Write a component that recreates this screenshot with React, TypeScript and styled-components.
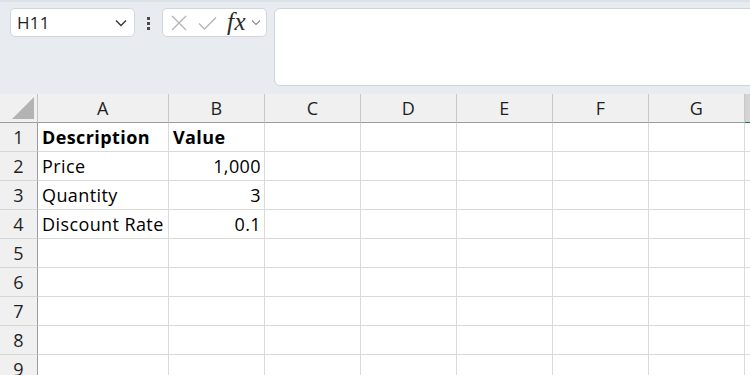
import React, { FC } from "react";
import styled, { createGlobalStyle } from "styled-components";

const GlobalStyle = createGlobalStyle`
  html, body {
    margin: 0;
    padding: 0;
    background: #ffffff;
    overflow: hidden;
  }
  * {
    box-sizing: border-box;
  }
`;

const COLUMNS = ["A", "B", "C", "D", "E", "F", "G", "H"];

type Cell = { text: string; bold?: boolean; align?: "left" | "right" };

const DATA: Cell[][] = [
  [{ text: "Description", bold: true }, { text: "Value", bold: true }],
  [{ text: "Price" }, { text: "1,000", align: "right" }],
  [{ text: "Quantity" }, { text: "3", align: "right" }],
  [{ text: "Discount Rate" }, { text: "0.1", align: "right" }],
];

const ROW_COUNT = 9;

const App: FC = () => {
  return (
    <>
      <GlobalStyle />
      <Wrapper>
        <Toolbar>
          <NameBox>
            <NameText>H11</NameText>
            <svg width="12" height="8" viewBox="0 0 12 8">
              <path d="M1 1.5 L6 6.5 L11 1.5" fill="none" stroke="#333" strokeWidth="1.3" />
            </svg>
          </NameBox>
          <Dots>
            <Dot />
            <Dot />
            <Dot />
          </Dots>
          <FormulaButtons>
            <svg width="18" height="18" viewBox="0 0 18 18">
              <path d="M2 2 L16 16 M16 2 L2 16" stroke="#b4b4b4" strokeWidth="1.3" fill="none" />
            </svg>
            <svg width="19" height="18" viewBox="0 0 19 18">
              <path d="M1 9.5 L6.5 15 L18 3.5" stroke="#b4b4b4" strokeWidth="1.3" fill="none" />
            </svg>
            <FxLabel>fx</FxLabel>
            <svg width="10" height="7" viewBox="0 0 10 7">
              <path d="M1 1.5 L5 5.5 L9 1.5" fill="none" stroke="#8a8a8a" strokeWidth="1.1" />
            </svg>
          </FormulaButtons>
          <FormulaBar />
        </Toolbar>
        <Sheet>
          <Corner>
            <svg width="22" height="22" viewBox="0 0 22 22">
              <path d="M22 0 L22 22 L0 22 Z" fill="#b3b3b3" />
            </svg>
          </Corner>
          {COLUMNS.map((col) => (
            <ColHeader key={col} selected={col === "H"}>
              {col !== "H" && col}
            </ColHeader>
          ))}
          {Array.from({ length: ROW_COUNT }).map((_, r) => (
            <React.Fragment key={r}>
              <RowHeader>{r + 1}</RowHeader>
              {COLUMNS.map((col, c) => {
                const cell = DATA[r]?.[c];
                return (
                  <GridCell key={col} bold={cell?.bold} align={cell?.align}>
                    {cell?.text}
                  </GridCell>
                );
              })}
            </React.Fragment>
          ))}
        </Sheet>
      </Wrapper>
    </>
  );
};

export default App;

const Wrapper = styled.div`
  width: 750px;
  height: 375px;
  overflow: hidden;
  font-family: "Open Sans", "Noto Sans", sans-serif;
`;

const Toolbar = styled.div`
  height: 94px;
  background: #e8ecf1;
  border-top: 2px solid #dde2e8;
  padding: 6px 0 0 10px;
  display: flex;
  align-items: flex-start;
`;

const NameBox = styled.div`
  width: 125px;
  height: 29px;
  background: #ffffff;
  border: 1px solid #d2d5d9;
  border-radius: 5px;
  display: flex;
  align-items: center;
  justify-content: space-between;
  padding: 0 7px 0 6px;
`;

const NameText = styled.span`
  font-size: 17px;
  letter-spacing: 0.3px;
  color: #1f1f1f;
`;

const Dots = styled.div`
  width: 27px;
  height: 29px;
  padding-top: 2px;
  display: flex;
  flex-direction: column;
  align-items: center;
  justify-content: center;
  gap: 2px;
`;

const Dot = styled.span`
  width: 3px;
  height: 3px;
  background: #4a4a4a;
`;

const FormulaButtons = styled.div`
  width: 105px;
  height: 29px;
  background: #ffffff;
  border: 1px solid #d2d5d9;
  border-radius: 5px;
  display: flex;
  align-items: center;
  padding: 0 4px 0 7px;
  gap: 10px;

  & > svg:last-child {
    margin-left: -5px;
  }
`;

const FxLabel = styled.span`
  font-family: "Liberation Serif", "DejaVu Serif", serif;
  font-style: italic;
  font-size: 25px;
  color: #2b2b2b;
  line-height: 1;
  margin-top: -2px;
  letter-spacing: 0.5px;
`;

const FormulaBar = styled.div`
  flex: 1;
  height: 78px;
  margin-left: 7px;
  margin-right: -10px;
  background: #ffffff;
  border: 1px solid #cfd2d6;
  border-radius: 6px;
`;

const Sheet = styled.div`
  display: grid;
  grid-template-columns: 38px 131px 96px 96px 96px 96px 96px 96px 96px;
  grid-template-rows: 29px;
  grid-auto-rows: 29px;
  font-size: 18px;
  letter-spacing: 0.4px;
  color: #000000;
`;

const Corner = styled.div`
  background: #f0f0f0;
  border-bottom: 1px solid #9c9c9c;
  border-right: 1px solid #c4c4c4;
  display: flex;
  align-items: flex-end;
  justify-content: flex-end;
  padding: 0 3px 3px 0;
`;

const ColHeader = styled.div<{ selected?: boolean }>`
  background: ${(p) => (p.selected ? "#d3d3d3" : "#f0f0f0")};
  border-bottom: 1px solid ${(p) => (p.selected ? "#1e7145" : "#9c9c9c")};
  border-right: 1px solid #c8c8c8;
  display: flex;
  align-items: center;
  justify-content: center;
  color: #1f1f1f;
`;

const RowHeader = styled.div`
  background: #f0f0f0;
  border-bottom: 1px solid #d6d6d6;
  border-right: 1px solid #9c9c9c;
  display: flex;
  align-items: center;
  justify-content: center;
  color: #1f1f1f;
`;

const GridCell = styled.div<{ bold?: boolean; align?: "left" | "right" }>`
  border-bottom: 1px solid #dadada;
  border-right: 1px solid #dadada;
  display: flex;
  align-items: center;
  justify-content: ${(p) => (p.align === "right" ? "flex-end" : "flex-start")};
  padding: 0 3px 0 4px;
  font-weight: ${(p) => (p.bold ? 700 : 400)};
  white-space: nowrap;
  overflow: hidden;
`;
